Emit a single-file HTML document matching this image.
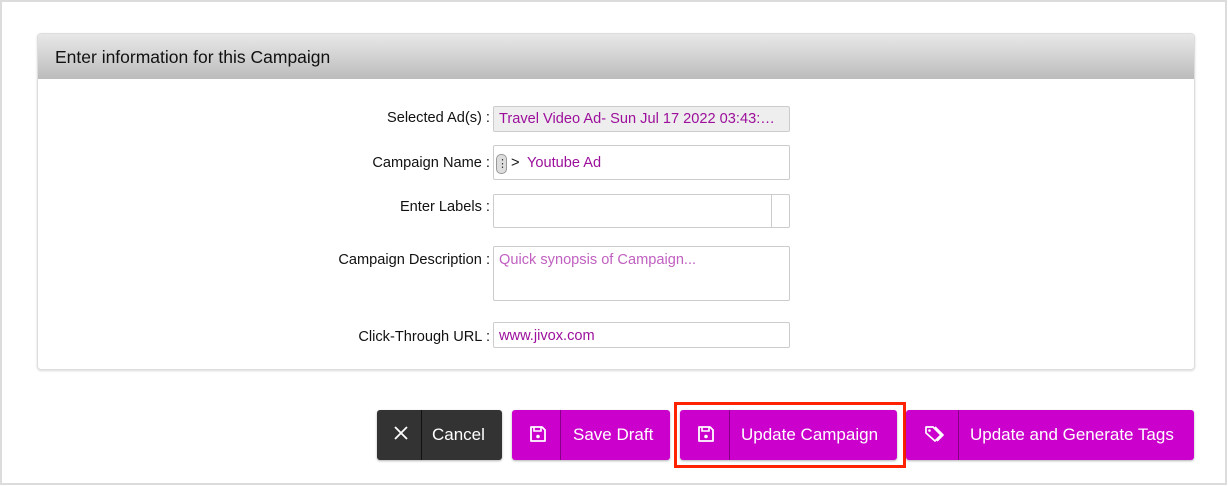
<!DOCTYPE html>
<html><head><style>
*{box-sizing:border-box;margin:0;padding:0}
body{width:1228px;height:486px;background:#fff;font-family:"Liberation Sans",sans-serif;position:relative;overflow:hidden}
.outer{position:absolute;left:0;top:0;width:1227px;height:485px;border:2px solid #dcdcdc}
.panel{position:absolute;left:37px;top:33px;width:1158px;height:337px;border:1px solid #ddd;border-radius:4px;box-shadow:0 1px 2px rgba(0,0,0,.15);overflow:hidden}
.hd{height:45px;background:linear-gradient(#e8e8e8,#bcbcbc);font-size:17.5px;color:#111;padding:13px 0 0 17px}
.lbl{position:absolute;right:738px;font-size:14.6px;color:#111;text-align:right}
.in{position:absolute;left:493px;width:297px;border:1px solid #ccc;border-radius:2px;font-size:14.6px;color:#9c109c;padding-left:5px}
.btn{position:absolute;top:410px;height:50px;border-radius:3px;color:#fff;font-size:17px;box-shadow:0 1px 2px rgba(0,0,0,.3)}
.btn .dv{position:absolute;top:0;bottom:0;width:1px;background:rgba(0,0,0,.35)}
.btn .t{position:absolute;top:15px}
.btn svg{position:absolute;top:15px}
.m{background:#cc00cc}
</style></head><body>
<div class="outer"></div>
<div class="panel"><div class="hd">Enter information for this Campaign</div></div>
<div class="lbl" style="top:110px">Selected Ad(s) :</div>
<div class="in" style="top:106px;height:26px;background:#eee;padding-top:4px">Travel Video Ad- Sun Jul 17 2022 03:43:…</div>
<div class="lbl" style="top:155px">Campaign Name :</div>
<div class="in" style="top:145px;height:35px;padding-left:2px"><span style="position:absolute;left:2px;top:8px;width:11px;height:20px;border:1px solid #999;border-radius:5px;background:#ddd;font-size:11px;color:#333;text-align:center;line-height:18px">⋮</span><span style="position:absolute;left:17px;top:9px;color:#111">&gt;</span><span style="position:absolute;left:33px;top:9px">Youtube Ad</span></div>
<div class="lbl" style="top:199px">Enter Labels :</div>
<div class="in" style="top:194px;height:34px"><div style="position:absolute;right:0;top:0;bottom:0;width:18px;border-left:1px solid #ccc"></div></div>
<div class="lbl" style="top:252px">Campaign Description :</div>
<div class="in" style="top:246px;height:55px;color:#c060c0;padding-top:5px">Quick synopsis of Campaign...</div>
<div class="lbl" style="top:329px">Click-Through URL :</div>
<div class="in" style="top:322px;height:26px;padding-top:5px">www.jivox.com</div>

<div class="btn" style="left:377px;width:125px;background:#333">
<svg style="left:17px;top:16px" width="14" height="14" viewBox="0 0 14 14"><path d="M1 1L13 13M13 1L1 13" stroke="#fff" stroke-width="1.8"/></svg>
<div class="dv" style="left:44px;background:#111"></div><span class="t" style="left:55px">Cancel</span></div>
<div class="btn m" style="left:512px;width:158px">
<svg style="left:17px" width="18" height="18" viewBox="0 0 18 18"><path d="M2 2h11l3 3v11H2z" fill="none" stroke="#fff" stroke-width="1.8" stroke-linejoin="round"/><path d="M5 2v4h7V2" fill="none" stroke="#fff" stroke-width="1.6"/><circle cx="9" cy="11.5" r="1.8" fill="#fff"/></svg>
<div class="dv" style="left:48px"></div><span class="t" style="left:61px">Save Draft</span></div>
<div style="position:absolute;left:674px;top:402px;width:232px;height:66px;border:3px solid #ff2200"></div>
<div class="btn m" style="left:680px;width:217px">
<svg style="left:17px" width="18" height="18" viewBox="0 0 18 18"><path d="M2 2h11l3 3v11H2z" fill="none" stroke="#fff" stroke-width="1.8" stroke-linejoin="round"/><path d="M5 2v4h7V2" fill="none" stroke="#fff" stroke-width="1.6"/><circle cx="9" cy="11.5" r="1.8" fill="#fff"/></svg>
<div class="dv" style="left:49px"></div><span class="t" style="left:61px">Update Campaign</span></div>
<div class="btn m" style="left:906px;width:288px">
<svg style="left:18px" width="22" height="20" viewBox="0 0 22 20"><path d="M2 2h7l8 8-6 6-9-8z" fill="none" stroke="#fff" stroke-width="1.7" stroke-linejoin="round"/><path d="M11 2l8 8-6 6" fill="none" stroke="#fff" stroke-width="1.7" stroke-linejoin="round"/><circle cx="5.5" cy="5.5" r="1.3" fill="#fff"/></svg>
<div class="dv" style="left:52px"></div><span class="t" style="left:64px">Update and Generate Tags</span></div>
</body></html>
